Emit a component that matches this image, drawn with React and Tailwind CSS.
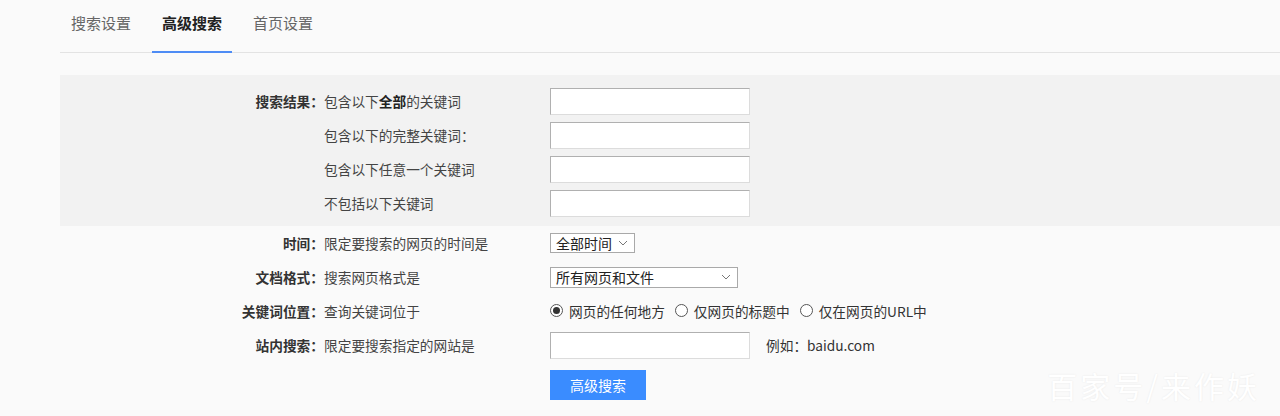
import React from 'react';

const font = { fontFamily: '"Noto Sans CJK SC", "Microsoft YaHei", sans-serif' };

const TextBox = () => (
  <div className="w-[200px] h-[27px] bg-white border border-[#dcdcdc] border-t-[#b0b0b0] border-l-[#b0b0b0]" />
);

const Chevron = () => (
  <svg width="10" height="6" viewBox="0 0 10 6" className="shrink-0">
    <path d="M1 1l4 4 4-4" fill="none" stroke="#777" strokeWidth="1" />
  </svg>
);

const Radio = ({ checked, label }) => (
  <div className="flex items-center gap-[6px]">
    <div className="w-[13px] h-[13px] rounded-full border border-[#555] bg-white flex items-center justify-center">
      {checked && <div className="w-[7px] h-[7px] rounded-full bg-[#333]" />}
    </div>
    <span>{label}</span>
  </div>
);

const Row = ({ label, desc, children }) => (
  <div className="flex items-center h-[26px]">
    <div className="w-[264px] text-right font-bold text-[#333]">{label}</div>
    <div className="w-[226px] text-[#444]">{desc}</div>
    <div className="flex items-center">{children}</div>
  </div>
);

const App = () => {
  return (
    <div className="relative w-[1280px] h-[416px] bg-[#fafafa] overflow-hidden text-[13.7px]" style={font}>
      {/* tabs */}
      <div className="ml-[60px] h-[53px] border-b border-[#e3e3e3] flex items-end gap-[11px] pl-[1px]">
        <div className="w-[80px] h-full flex items-center justify-center text-[15px] text-[#666] pb-[5px]">搜索设置</div>
        <div className="w-[80px] h-full flex items-center justify-center text-[15px] text-[#222] font-bold pb-[5px] border-b-[2px] border-[#4e8cf5] mb-[-1px]">高级搜索</div>
        <div className="w-[80px] h-full flex items-center justify-center text-[15px] text-[#666] pb-[5px]">首页设置</div>
      </div>

      {/* gray band */}
      <div className="ml-[60px] mt-[22px] bg-[#f2f2f2] pt-[13px] pb-[10px] flex flex-col gap-[8px]">
        <Row label="搜索结果：" desc={<>包含以下<b className="text-[#222]">全部</b>的关键词</>}>
          <TextBox />
        </Row>
        <Row label="" desc="包含以下的完整关键词：">
          <TextBox />
        </Row>
        <Row label="" desc="包含以下任意一个关键词">
          <TextBox />
        </Row>
        <Row label="" desc="不包括以下关键词">
          <TextBox />
        </Row>
      </div>

      {/* other options */}
      <div className="ml-[60px] mt-[4px] flex flex-col gap-[8px]">
        <Row label="时间：" desc="限定要搜索的网页的时间是">
          <div className="w-[85px] h-[20px] bg-white border border-[#a9a9a9] flex items-center justify-between pl-[5px] pr-[6px] text-[14px] text-[#222]">
            <span>全部时间</span>
            <Chevron />
          </div>
        </Row>
        <Row label="文档格式：" desc="搜索网页格式是">
          <div className="w-[188px] h-[21px] bg-white border border-[#a9a9a9] flex items-center justify-between pl-[5px] pr-[6px] text-[14px] text-[#222]">
            <span>所有网页和文件</span>
            <Chevron />
          </div>
        </Row>
        <Row label="关键词位置：" desc="查询关键词位于">
          <div className="flex items-center gap-[10px] text-[#333]">
            <Radio checked label="网页的任何地方" />
            <Radio label="仅网页的标题中" />
            <Radio label="仅在网页的URL中" />
          </div>
        </Row>
        <Row label="站内搜索：" desc="限定要搜索指定的网站是">
          <TextBox />
          <span className="ml-[16px] text-[#333]">例如：baidu.com</span>
        </Row>
        <div className="flex mt-[4px]">
          <div className="w-[490px]" />
          <button className="w-[96px] h-[30px] bg-[#3a8cff] text-white text-[14px]">高级搜索</button>
        </div>
      </div>

      {/* watermark */}
      <div className="absolute right-[20px] bottom-[16px] text-[30px] leading-none text-white tracking-[3px]" style={{ textShadow: '0 0 2px rgba(0,0,0,0.08)' }}>
        百家号/来作妖
      </div>
    </div>
  );
};

export default App;
